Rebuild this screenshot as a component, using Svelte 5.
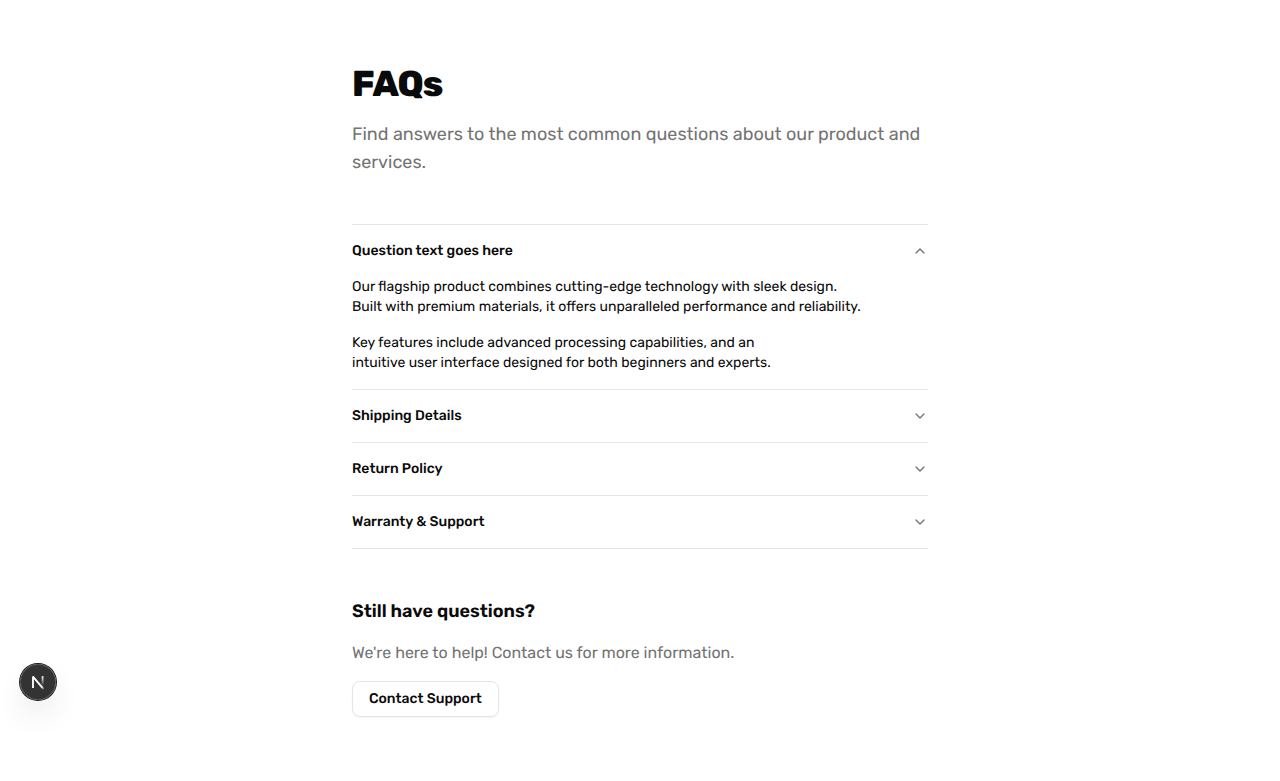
<script>
  let open = $state(0);
  const items = ['Question text goes here', 'Shipping Details', 'Return Policy', 'Warranty & Support'];
</script>

<main>
  <header>
    <h1>FAQs</h1>
    <p>Find answers to the most common questions about our product and services.</p>
  </header>
  <section class="accordion">
    {#each items as item, i}
      <div class="item">
        <button class="trigger" onclick={() => (open = open === i ? -1 : i)}>
          <span>{item}</span>
          <svg class:up={open === i} viewBox="0 0 24 24"><path d="m6 9 6 6 6-6" /></svg>
        </button>
        {#if i === 0 && open === 0}
          <div class="answer">
            <p>Our flagship product combines cutting-edge technology with sleek design.<br />Built with premium materials, it offers unparalleled performance and reliability.</p>
            <p>Key features include advanced processing capabilities, and an<br />intuitive user interface designed for both beginners and experts.</p>
          </div>
        {/if}
      </div>
    {/each}
  </section>
  <footer>
    <h2>Still have questions?</h2>
    <p>We're here to help! Contact us for more information.</p>
    <button class="contact">Contact Support</button>
  </footer>
</main>
<div class="badge">
  <svg width="36" height="36" viewBox="0 0 36 36" fill="none">
    <defs>
      <linearGradient id="a" x1="19" y1="18" x2="24.5" y2="25.5" gradientUnits="userSpaceOnUse"><stop stop-color="#fff" /><stop offset=".6" stop-color="#fff" /><stop offset="1" stop-color="#fff" stop-opacity="0" /></linearGradient>
      <linearGradient id="b" x1="22.5" y1="12" x2="22.5" y2="22" gradientUnits="userSpaceOnUse"><stop stop-color="#fff" /><stop offset="1" stop-color="#fff" stop-opacity="0" /></linearGradient>
    </defs>
    <path d="M23.6 25.2L13 12.6V24" stroke="url(#a)" stroke-width="1.86" stroke-linejoin="bevel" />
    <path d="M22.6 12.2v10.6" stroke="url(#b)" stroke-width="1.86" />
  </svg>
</div>

<style>
  :global(body) { background: #fff; }
  main { box-sizing: border-box; width: 576px; margin: 0 auto; padding: 64px 0; font-family: Rubik, Inter, sans-serif; color: #0a0a0a; text-rendering: geometricPrecision; }
  h1, h2, p { margin: 0; }
  h1 { font-size: 36px; line-height: 40px; font-weight: 800; letter-spacing: -0.9px; }
  header p { margin-top: 16px; font-size: 18px; line-height: 28px; color: #737373; }
  .accordion { margin-top: 48px; border-top: 1px solid #e5e5e5; }
  .item { border-bottom: 1px solid #e5e5e5; }
  .trigger { display: flex; justify-content: space-between; width: 100%; padding: 16px 0; border: 0; background: none; font: 500 14px/20px Rubik, Inter, sans-serif; color: #0a0a0a; text-rendering: inherit; }
  .trigger svg { width: 16px; height: 16px; margin-top: 2px; fill: none; stroke: #737373; stroke-width: 2; stroke-linecap: round; stroke-linejoin: round; }
  .up { transform: rotate(180deg); }
  .answer { padding-bottom: 16px; font-size: 14px; line-height: 20px; }
  .answer p + p { margin-top: 16px; }
  footer { margin-top: 48px; }
  h2 { font-size: 18px; line-height: 28px; font-weight: 600; }
  footer p { margin: 16px 0; font-size: 16px; line-height: 24px; color: #737373; }
  .contact { display: block; height: 36px; padding: 0 16px; border: 1px solid #e5e5e5; border-radius: 8px; background: #fff; font: 500 14px/20px Rubik, Inter, sans-serif; color: #0a0a0a; text-rendering: inherit; box-shadow: 0 1px 2px rgba(0, 0, 0, 0.05); }
  .badge { position: fixed; left: 20px; top: 664px; width: 36px; height: 36px; border-radius: 50%; background: rgba(0, 0, 0, 0.8); box-shadow: 0 0 0 1px #171717, inset 0 0 0 1px hsla(0, 0%, 100%, 0.14), 0 16px 32px -8px rgba(0, 0, 0, 0.24); }
  .badge svg { display: block; }
</style>
